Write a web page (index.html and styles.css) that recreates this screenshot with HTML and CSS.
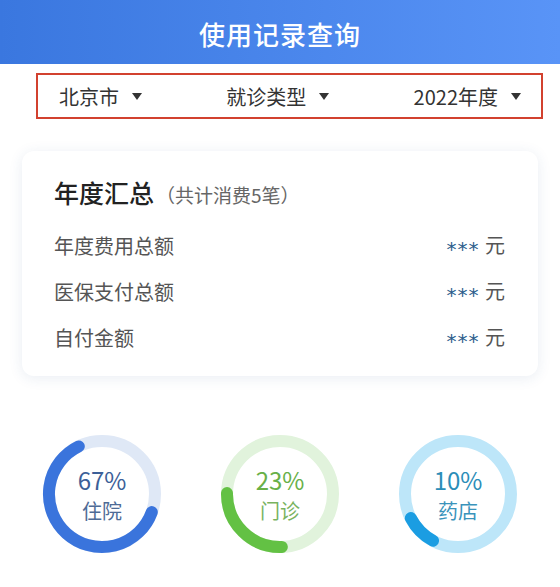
FILE: index.html
```html
<!DOCTYPE html>
<html lang="zh-CN">
<head>
  <meta charset="UTF-8" />
  <meta name="viewport" content="width=device-width, initial-scale=1.0" />
  <title>使用记录查询</title>
  <link rel="stylesheet" href="styles.css">
</head>
<body>
  <div class="header">使用记录查询</div>

  <div class="filters">
    <div class="filter">北京市<span class="caret"></span></div>
    <div class="filter">就诊类型<span class="caret"></span></div>
    <div class="filter">2022年度<span class="caret"></span></div>
  </div>

  <div class="card">
    <div class="card-title">年度汇总<span class="card-sub">（共计消费5笔）</span></div>
    <div class="row">
      <span class="label">年度费用总额</span>
      <span class="value"><span class="stars">***</span> 元</span>
    </div>
    <div class="row">
      <span class="label">医保支付总额</span>
      <span class="value"><span class="stars">***</span> 元</span>
    </div>
    <div class="row">
      <span class="label">自付金额</span>
      <span class="value"><span class="stars">***</span> 元</span>
    </div>
  </div>

  <div class="rings">
    <div class="ring ring-blue">
      <svg viewBox="0 0 120 120" width="120" height="120">
        <circle class="track" cx="60" cy="60" r="53" />
        <path class="arc" d="M109.8,78.1 A53,53 0 1,1 36.8,12.4" />
      </svg>
      <div class="ring-text">
        <div class="pct">67%</div>
        <div class="name">住院</div>
      </div>
    </div>
    <div class="ring ring-green">
      <svg viewBox="0 0 120 120" width="120" height="120">
        <circle class="track" cx="60" cy="60" r="53" />
        <path class="arc" d="M61.85,112.97 A53,53 0 0,1 7.01,59.08" />
      </svg>
      <div class="ring-text">
        <div class="pct">23%</div>
        <div class="name">门诊</div>
      </div>
    </div>
    <div class="ring ring-cyan">
      <svg viewBox="0 0 120 120" width="120" height="120">
        <circle class="track" cx="60" cy="60" r="53" />
        <path class="arc" d="M35.1,106.8 A53,53 0 0,1 12.78,84.06" />
      </svg>
      <div class="ring-text">
        <div class="pct">10%</div>
        <div class="name">药店</div>
      </div>
    </div>
  </div>
</body>
</html>
```

FILE: styles.css
```css
body, html {
  margin: 0;
  padding: 0;
  background: #fff;
  font-family: "Noto Sans CJK SC", "Noto Sans", sans-serif;
  color: #333;
}
.header {
  height: 64px;
  line-height: 68px;
  text-align: center;
  color: #fff;
  font-size: 26px;
  font-weight: 500;
  letter-spacing: 1px;
  background: linear-gradient(90deg, #3a77df, #5994f7);
}
.filters {
  margin: 9px 17px 0 36px;
  height: 42px;
  border: 2px solid #d2412f;
  display: flex;
  justify-content: space-between;
  align-items: center;
  padding: 0 20px 0 21px;
  font-size: 20px;
  color: #333;
}
.filter {
  display: flex;
  align-items: center;
}
.caret {
  width: 0;
  height: 0;
  margin-left: 13px;
  border-left: 5px solid transparent;
  border-right: 5px solid transparent;
  border-top: 7px solid #333;
}
.card {
  margin: 32px 22px 0 22px;
  padding: 23px 33px 16px 32px;
  border-radius: 12px;
  background: #fff;
  box-shadow: 0 2px 14px rgba(40, 80, 140, 0.10);
}
.card-title {
  font-size: 25px;
  font-weight: 500;
  color: #222;
  margin-bottom: 12px;
}
.card-sub {
  font-size: 19px;
  font-weight: 400;
  color: #666;
  margin-left: 2px;
}
.row {
  display: flex;
  justify-content: space-between;
  align-items: center;
  height: 46px;
  font-size: 20px;
  color: #555;
}
.value {
  color: #555;
}
.stars {
  color: #2c5d8c;
  font-family: "DejaVu Sans", sans-serif;
  font-size: 20px;
  letter-spacing: 1px;
  vertical-align: -3px;
  margin-right: 1px;
}
.rings {
  display: flex;
  justify-content: center;
  gap: 58px;
  margin-top: 58px;
}
.ring {
  display: grid;
  width: 120px;
  height: 120px;
}
.ring svg, .ring-text {
  grid-area: 1 / 1;
}
.track {
  fill: none;
  stroke-width: 12;
}
.arc {
  fill: none;
  stroke-width: 12;
  stroke-linecap: round;
}
.ring-text {
  display: flex;
  flex-direction: column;
  align-items: center;
  justify-content: center;
  padding-top: 4px;
}
.pct {
  font-size: 24px;
  line-height: 30px;
}
.name {
  font-size: 20px;
  line-height: 32px;
}
.ring-blue .track { stroke: #dfe8f6; }
.ring-blue .arc { stroke: #3a74dc; }
.ring-blue .pct { color: #3c5f98; }
.ring-blue .name { color: #4e6b96; }
.ring-green .track { stroke: #e1f3dc; }
.ring-green .arc { stroke: #63c144; }
.ring-green .pct { color: #68b048; }
.ring-green .name { color: #79b35f; }
.ring-cyan .track { stroke: #bde6f9; }
.ring-cyan .arc { stroke: #1b9de2; }
.ring-cyan .pct { color: #2b8db8; }
.ring-cyan .name { color: #3a93bb; }
```
